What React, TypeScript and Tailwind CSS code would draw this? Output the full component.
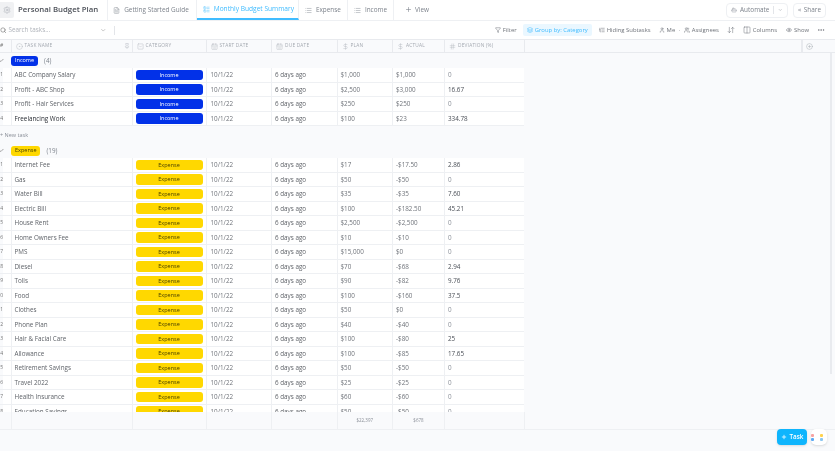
import { Check, ChevronDown, Search, Plus, Ellipsis, Filter, Layers, ListTree, User, Users, Columns2, Eye, Share2, Bot, FileText, LayoutList, List, CirclePlus, Pin, CalendarDays, DollarSign, Hash, SquareChevronDown, ArrowDownUp, Settings, CircleDot } from 'lucide-react'

type Row = { name: string; plan: string; actual: string; dev: string; dark?: boolean }

const incomeRows: Row[] = [
  { name: 'ABC Company Salary', plan: '$1,000', actual: '$1,000', dev: '0' },
  { name: 'Profit - ABC Shop', plan: '$2,500', actual: '$3,000', dev: '16.67' },
  { name: 'Profit - Hair Services', plan: '$250', actual: '$250', dev: '0' },
  { name: 'Freelancing Work', plan: '$100', actual: '$23', dev: '334.78', dark: true },
]

const expenseRows: Row[] = [
  { name: 'Internet Fee', plan: '$17', actual: '-$17.50', dev: '2.86' },
  { name: 'Gas', plan: '$50', actual: '-$50', dev: '0' },
  { name: 'Water Bill', plan: '$35', actual: '-$35', dev: '7.60' },
  { name: 'Electric Bill', plan: '$100', actual: '-$182.50', dev: '45.21' },
  { name: 'House Rent', plan: '$2,500', actual: '-$2,500', dev: '0' },
  { name: 'Home Owners Fee', plan: '$10', actual: '-$10', dev: '0' },
  { name: 'PMS', plan: '$15,000', actual: '$0', dev: '0' },
  { name: 'Diesel', plan: '$70', actual: '-$68', dev: '2.94' },
  { name: 'Tolls', plan: '$90', actual: '-$82', dev: '9.76' },
  { name: 'Food', plan: '$100', actual: '-$160', dev: '37.5' },
  { name: 'Clothes', plan: '$50', actual: '$0', dev: '0' },
  { name: 'Phone Plan', plan: '$40', actual: '-$40', dev: '0' },
  { name: 'Hair & Facial Care', plan: '$100', actual: '-$80', dev: '25' },
  { name: 'Allowance', plan: '$100', actual: '-$85', dev: '17.65' },
  { name: 'Retirement Savings', plan: '$50', actual: '-$50', dev: '0' },
  { name: 'Travel 2022', plan: '$25', actual: '-$25', dev: '0' },
  { name: 'Health Insurance', plan: '$60', actual: '-$60', dev: '0' },
  { name: 'Education Savings', plan: '$50', actual: '-$50', dev: '0' },
]

const grid = 'grid grid-cols-[10.5px_121px_74px_65.5px_65.5px_55.5px_52px_80px]'

function BudgetRow({ row, index, kind }: { row: Row; index: number; kind: 'Income' | 'Expense' }) {
  const tag = kind === 'Income' ? 'bg-[#0231e8] text-white' : 'bg-[#ffd800] text-[#4a4300]'
  return (
    <div className={`${grid} h-[14.5px] w-[524px] shrink-0 items-center border-b border-[#eef0f3] bg-white text-[6.3px] text-[#6f737a]`}>
      <div className="flex h-full w-[3px] items-center justify-end overflow-hidden bg-[#f9fafc] text-[5px] text-[#777]">{index + 1}</div>
      <div className={`flex h-full items-center border-l border-[#eef0f3] pl-[3px] ${row.dark ? 'text-[#292d34]' : 'text-[#5f6369]'}`}>{row.name}</div>
      <div className="flex h-full items-center border-l border-[#eef0f3] px-[3px]">
        <span className={`flex h-[10.5px] w-[67px] items-center justify-center rounded-[3px] text-[5.5px] font-medium ${tag}`}>{kind}</span>
      </div>
      <div className="flex h-full items-center border-l border-[#eef0f3] pl-[4px]">10/1/22</div>
      <div className="flex h-full items-center border-l border-[#eef0f3] pl-[3px] text-[#5f6369]">6 days ago</div>
      <div className="flex h-full items-center border-l border-[#eef0f3] pl-[3px]">{row.plan}</div>
      <div className="flex h-full items-center border-l border-[#eef0f3] pl-[3px]">{row.actual}</div>
      <div className={`flex h-full items-center border-l border-[#eef0f3] pl-[3px] ${row.dev === '0' ? 'text-[#8a8f98]' : 'text-[#4a4f57]'}`}>{row.dev}</div>
    </div>
  )
}

function HeadCell({ icon: Icon, label }: { icon: typeof Hash; label: string }) {
  return (
    <div className="flex h-full items-center gap-[2px] border-l border-[#e8eaee] pl-[4px] text-[4.8px] uppercase tracking-[0.2px] text-[#a4a9b1]">
      <Icon className="size-[7px] text-[#b5b9c0]" strokeWidth={1.5} />
      {label}
    </div>
  )
}

function GroupHead({ label, count, tag }: { label: string; count: number; tag: string }) {
  return (
    <div className="flex h-[15px] shrink-0 items-center text-[6.3px] text-[#7c828b]">
      <Check className="ml-[-1px] size-[5px] text-[#555]" strokeWidth={2.5} />
      <span className={`ml-[7px] flex h-[10px] items-center rounded-[3px] px-[4px] text-[5.5px] font-medium ${tag}`}>{label}</span>
      <span className="ml-[6px]">({count})</span>
    </div>
  )
}

function Tab({ icon: Icon, label, active, className }: { icon: typeof Hash; label: string; active?: boolean; className: string }) {
  return (
    <div className={`flex h-full items-center gap-[4px] border-r border-[#eef0f3] ${className} ${active ? 'border-b-2 border-b-[#40bcff] text-[#40bcff]' : 'text-[#7c828b]'}`}>
      <Icon className="size-[7px]" strokeWidth={1.5} />
      {label}
    </div>
  )
}

export default function App() {
  return (
    <div className="relative flex h-[451px] w-[835px] flex-col overflow-hidden bg-[#f9fafc] font-['Open_Sans','Noto_Sans',sans-serif] antialiased blur-[0.25px]">
      <header className="flex h-[21px] shrink-0 items-center border-b border-[#eef0f3] bg-white text-[6.4px]">
        <div className="flex h-[16px] w-[14px] items-center justify-center rounded-r-[2px] bg-[#f0f1f3]">
          <Settings className="size-[8px] text-[#a4a9b1]" strokeWidth={1.5} />
        </div>
        <span className="ml-[4px] mr-[9px] text-[7.8px] font-semibold text-[#4b4f57]">Personal Budget Plan</span>
        <div className="flex h-[20px] items-center border-l border-[#eef0f3]">
          <Tab icon={FileText} label="Getting Started Guide" className="pl-[5px] pr-[7px]" />
          <Tab icon={LayoutList} label="Monthly Budget Summary" className="pl-[6px] pr-[4px] text-[6.6px]" active />
          <Tab icon={List} label="Expense" className="px-[6px]" />
          <Tab icon={List} label="Income" className="px-[6px]" />
        </div>
        <div className="ml-[11px] flex items-center gap-[3px] text-[#7c828b]">
          <Plus className="size-[7px]" />
          View
        </div>
        <div className="ml-auto flex items-center gap-[5px] pr-[9px] text-[#7c828b]">
          <div className="flex h-[15px] w-[62px] items-center gap-[3px] rounded-[4px] border border-[#eef0f3] px-[4px]">
            <Bot className="size-[8px]" strokeWidth={1.5} />
            Automate
            <span className="ml-[1px] h-[8px] border-l border-[#e3e5e9]" />
            <ChevronDown className="ml-[1px] size-[6px]" />
          </div>
          <div className="flex h-[15px] w-[33px] items-center gap-[3px] rounded-[4px] border border-[#eef0f3] px-[4px]">
            <Share2 className="size-[6px]" />
            Share
          </div>
        </div>
      </header>

      <div className="flex h-[18px] shrink-0 items-center bg-white text-[5.9px] text-[#6f737a]">
        <Search className="size-[6.5px] text-[#666]" />
        <span className="ml-[2px] text-[6.3px] text-[#b0b4bb]">Search tasks...</span>
        <ChevronDown className="ml-[50px] size-[6.5px] text-[#999]" />
        <span className="ml-[7px] h-[9px] border-l border-[#e3e5e9]" />
        <div className="ml-auto flex items-center pr-[10px]">
          <Filter className="mr-[2px] size-[6px]" />
          Filter
          <span className="ml-[6px] flex h-[12px] items-center gap-[2px] rounded-[2px] bg-[#eaf7ff] px-[4px] text-[#40bcff]">
            <Layers className="size-[6px]" />
            Group by: Category
          </span>
          <ListTree className="ml-[7px] mr-[2px] size-[6px]" />
          Hiding Subtasks
          <User className="ml-[8px] mr-[2px] size-[6px]" />
          Me
          <span className="mx-[3.5px]">·</span>
          <Users className="mr-[2px] size-[6px]" />
          Assignees
          <ArrowDownUp className="ml-[8px] size-[8px]" strokeWidth={1.5} />
          <Columns2 className="ml-[8px] mr-[2px] size-[8px]" strokeWidth={1.5} />
          Columns
          <Eye className="ml-[9px] mr-[2px] size-[6px]" />
          Show
          <Ellipsis className="ml-[8px] size-[8px]" />
        </div>
      </div>

      <div className="flex h-[14px] shrink-0 border-y border-[#e8eaee] bg-[#f9fafc]">
        <div className={`${grid} w-[524px] items-center`}>
          <div className="text-[5px] text-[#777]">#</div>
          <div className="flex h-full items-center justify-between border-l border-[#e8eaee] pl-[4px] pr-[2px] text-[4.8px] uppercase tracking-[0.2px] text-[#a4a9b1]">
            <span className="flex items-center gap-[2px]">
              <CircleDot className="size-[7px] text-[#b5b9c0]" strokeWidth={1.5} />
              Task Name
            </span>
            <Pin className="size-[6px] text-[#b5b9c0]" />
          </div>
          <HeadCell icon={SquareChevronDown} label="Category" />
          <HeadCell icon={CalendarDays} label="Start Date" />
          <HeadCell icon={CalendarDays} label="Due Date" />
          <HeadCell icon={DollarSign} label="Plan" />
          <HeadCell icon={DollarSign} label="Actual" />
          <HeadCell icon={Hash} label="Deviation (%)" />
        </div>
        <div className="flex-1 border-l border-[#e8eaee]" />
        <div className="flex w-[34px] items-center border-l-2 border-[#e8eaee] pl-[3px]">
          <CirclePlus className="size-[7px] text-[#a4a9b1]" strokeWidth={1.5} />
        </div>
      </div>

      <div className="flex h-[359px] shrink-0 flex-col overflow-hidden">
        <GroupHead label="Income" count={4} tag="bg-[#0231e8] text-white" />
        {incomeRows.map((row, i) => (
          <BudgetRow key={row.name} row={row} index={i} kind="Income" />
        ))}
        <div className="flex h-[17px] shrink-0 items-center pt-[1px] text-[5.5px] text-[#8a8f98]">+ New task</div>
        <GroupHead label="Expense" count={19} tag="bg-[#ffd800] text-[#4a4300]" />
        {expenseRows.map((row, i) => (
          <BudgetRow key={row.name} row={row} index={i} kind="Expense" />
        ))}
      </div>

      <div className="flex h-[18px] shrink-0 border-b border-[#eef0f3]">
        <div className={`${grid} w-[524px] items-center text-[4.5px] text-[#8a8f98]`}>
          <div />
          <div className="h-full border-l border-[#eef0f3]" />
          <div className="h-full border-l border-[#eef0f3]" />
          <div className="h-full border-l border-[#eef0f3]" />
          <div className="h-full border-l border-[#eef0f3]" />
          <div className="flex h-full items-center justify-center border-l border-[#eef0f3]">$22,397</div>
          <div className="flex h-full items-center justify-center border-l border-[#eef0f3]">$678</div>
          <div className="h-full border-l border-[#eef0f3]" />
        </div>
        <div className="flex-1 border-l border-[#eef0f3]" />
      </div>

      <div className="absolute left-[777px] top-[429px] flex h-[16px] w-[30px] items-center justify-center gap-[3px] rounded-[4px] bg-[#0fb5fd] text-[6.3px] font-semibold text-white shadow">
        <Plus className="size-[6px]" strokeWidth={3} />
        Task
      </div>
      <div className="absolute left-[811px] top-[429px] grid size-[16px] grid-cols-2 place-content-center gap-[1px] rounded-[5px] bg-white shadow">
        <span className="size-[3px] rounded-[1px] bg-[#f7a3a3]" />
        <span className="size-[3px] rounded-[1px] bg-[#ffd24d]" />
        <span className="size-[3px] rounded-[1px] bg-[#5aa9f5]" />
        <span className="size-[3px] rounded-[1px] bg-[#8bc6f0]" />
      </div>
      <div className="absolute left-[830px] top-[53px] h-[321px] w-[2px] bg-[#e9ebef]" />
    </div>
  )
}
